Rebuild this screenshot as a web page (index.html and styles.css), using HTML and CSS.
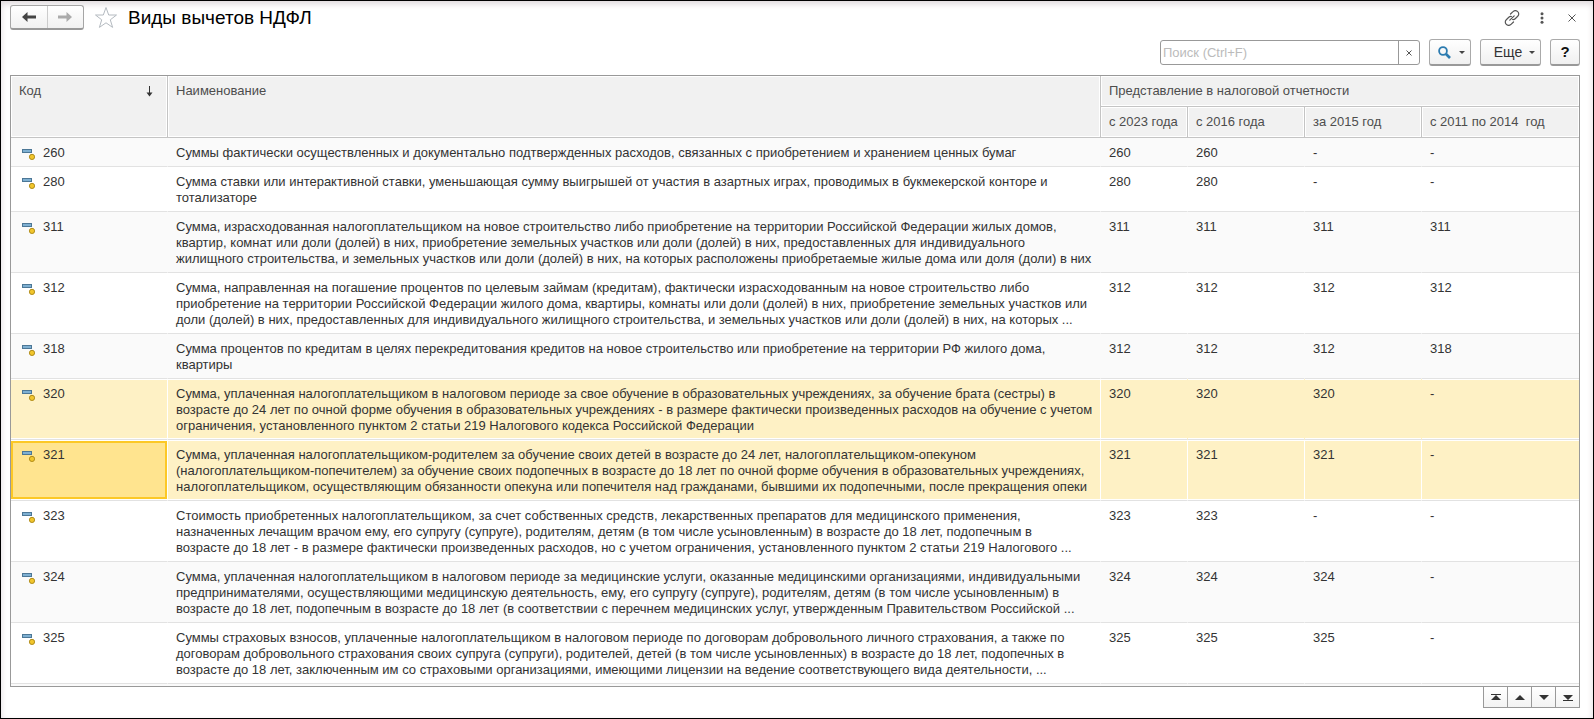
FILE: index.html
```html
<!DOCTYPE html>
<html lang="ru">
<head>
<meta charset="utf-8">
<title>Виды вычетов НДФЛ</title>
<link rel="stylesheet" href="styles.css">
</head>
<body>
<svg class="defs" aria-hidden="true">
  <symbol id="item" viewBox="0 0 13 11">
    <rect x=".5" y=".5" width="9" height="3" fill="#7fb0d2" stroke="#4c7796"/>
    <circle cx="10" cy="7.900" r="2.600" fill="#f2c62c" stroke="#b08d1c"/>
  </symbol>
</svg>
<main class="window">
  <header class="titlebar">
    <div class="history">
      <button type="button" aria-label="Назад"><svg width="14" height="10" viewBox="0 0 14 10"><path d="M0 5 5.500 0v3.600H14v2.800H5.500V10z" fill="#444"/></svg></button>
      <button type="button" aria-label="Вперед"><svg width="14" height="10" viewBox="0 0 14 10"><path d="M14 5 8.500 0v3.600H0v2.800h8.500V10z" fill="#ababab"/></svg></button>
    </div>
    <button type="button" class="plain star" aria-label="В избранное"><svg width="24" height="23" viewBox="0 0 24 23"><path d="M12 1.500 14.700 9h7.800l-6.200 4.800 2.300 7.600L12 16.800l-6.600 4.600 2.300-7.600L1.500 9h7.800z" fill="#fff" stroke="#b4bac0"/></svg></button>
    <h1>Виды вычетов НДФЛ</h1>
    <div class="actions">
      <button type="button" class="plain" aria-label="Ссылка"><svg width="16" height="16" viewBox="0 0 16 16" fill="none" stroke="#555" stroke-width="1.200" stroke-linecap="round"><path d="M6.500 4 9 1.600a3.200 3.200 0 0 1 4.700 0 3.200 3.200 0 0 1 0 4.700l-2.500 2.400a3 3 0 0 1-2.700.8M9.500 12 7 14.400a3.200 3.200 0 0 1-4.700 0 3.200 3.200 0 0 1 0-4.700l2.500-2.400a3 3 0 0 1 2.700-.8M5.800 10.200l4.400-4.400"/></svg></button>
      <button type="button" class="plain" aria-label="Меню"><svg width="4" height="12" viewBox="0 0 4 12" fill="#555"><circle cx="2" cy="1.700" r="1.500"/><circle cx="2" cy="6" r="1.500"/><circle cx="2" cy="10.300" r="1.500"/></svg></button>
      <button type="button" class="plain" aria-label="Закрыть"><svg width="8" height="8" viewBox="0 0 8 8" stroke="#555"><path d="m.5.5 7 7m0-7-7 7"/></svg></button>
    </div>
  </header>

  <form class="toolbar" role="search">
    <div class="search">
      <input type="text" aria-label="Поиск" placeholder="Поиск (Ctrl+F)">
      <button type="button" aria-label="Очистить"><svg width="6" height="6" viewBox="0 0 6 6" stroke="#555"><path d="m.5.5 5 5m0-5-5 5"/></svg></button>
    </div>
    <button type="button" class="button find" aria-label="Найти"><svg width="13" height="13" viewBox="0 0 13 13" fill="none" stroke="#2c7bb0"><circle cx="5" cy="5" r="3.900" stroke-width="1.800"/><path d="m8 8 4 4" stroke-width="2.600"/></svg><svg width="6" height="3" viewBox="0 0 6 3"><path d="M0 0h6L3 3z" fill="#444"/></svg></button>
    <button type="button" class="button more">Еще<svg width="6" height="3" viewBox="0 0 6 3"><path d="M0 0h6L3 3z" fill="#444"/></svg></button>
    <button type="button" class="button help" aria-label="Справка">?</button>
  </form>

  <div class="grid">
    <table>
      <colgroup><col class="c-code"><col><col class="c-2023"><col class="c-year"><col class="c-year"><col class="c-last"></colgroup>
      <thead>
        <tr>
          <th rowspan="2"><div class="sorted">Код<svg width="7" height="11" viewBox="0 0 7 11"><path d="M3.500 0v9" stroke="#333"/><path d="M.5 6.500h6l-3 4z" fill="#333"/></svg></div></th>
          <th rowspan="2">Наименование</th>
          <th colspan="4">Представление в налоговой отчетности</th>
        </tr>
        <tr><th>с 2023 года</th><th>с 2016 года</th><th>за 2015 год</th><th class="pre">с 2011 по 2014  год</th></tr>
      </thead>
      <tbody>
        <tr><td><svg class="item"><use href="#item"/></svg>260</td><td>Суммы фактически осуществленных и документально подтвержденных расходов, связанных с приобретением и хранением ценных бумаг</td><td>260</td><td>260</td><td>-</td><td>-</td></tr>
        <tr><td><svg class="item"><use href="#item"/></svg>280</td><td>Сумма ставки или интерактивной ставки, уменьшающая сумму выигрышей от участия в азартных играх, проводимых в букмекерской конторе и<br>тотализаторе</td><td>280</td><td>280</td><td>-</td><td>-</td></tr>
        <tr><td><svg class="item"><use href="#item"/></svg>311</td><td>Сумма, израсходованная налогоплательщиком на новое строительство либо приобретение на территории Российской Федерации жилых домов,<br>квартир, комнат или доли (долей) в них, приобретение земельных участков или доли (долей) в них, предоставленных для индивидуального<br>жилищного строительства, и земельных участков или доли (долей) в них, на которых расположены приобретаемые жилые дома или доля (доли) в них</td><td>311</td><td>311</td><td>311</td><td>311</td></tr>
        <tr><td><svg class="item"><use href="#item"/></svg>312</td><td>Сумма, направленная на погашение процентов по целевым займам (кредитам), фактически израсходованным на новое строительство либо<br>приобретение на территории Российской Федерации жилого дома, квартиры, комнаты или доли (долей) в них, приобретение земельных участков или<br>доли (долей) в них, предоставленных для индивидуального жилищного строительства, и земельных участков или доли (долей) в них, на которых ...</td><td>312</td><td>312</td><td>312</td><td>312</td></tr>
        <tr><td><svg class="item"><use href="#item"/></svg>318</td><td>Сумма процентов по кредитам в целях перекредитования кредитов на новое строительство или приобретение на территории РФ жилого дома,<br>квартиры</td><td>312</td><td>312</td><td>312</td><td>318</td></tr>
        <tr class="selected"><td><svg class="item"><use href="#item"/></svg>320</td><td>Сумма, уплаченная налогоплательщиком в налоговом периоде за свое обучение в образовательных учреждениях, за обучение брата (сестры) в<br>возрасте до 24 лет по очной форме обучения в образовательных учреждениях - в размере фактически произведенных расходов на обучение с учетом<br>ограничения, установленного пунктом 2 статьи 219 Налогового кодекса Российской Федерации</td><td>320</td><td>320</td><td>320</td><td>-</td></tr>
        <tr class="selected current"><td class="focus"><svg class="item"><use href="#item"/></svg>321</td><td>Сумма, уплаченная налогоплательщиком-родителем за обучение своих детей в возрасте до 24 лет, налогоплательщиком-опекуном<br>(налогоплательщиком-попечителем) за обучение своих подопечных в возрасте до 18 лет по очной форме обучения в образовательных учреждениях,<br>налогоплательщиком, осуществляющим обязанности опекуна или попечителя над гражданами, бывшими их подопечными, после прекращения опеки</td><td>321</td><td>321</td><td>321</td><td>-</td></tr>
        <tr><td><svg class="item"><use href="#item"/></svg>323</td><td>Стоимость приобретенных налогоплательщиком, за счет собственных средств, лекарственных препаратов для медицинского применения,<br>назначенных лечащим врачом ему, его супругу (супруге), родителям, детям (в том числе усыновленным) в возрасте до 18 лет, подопечным в<br>возрасте до 18 лет - в размере фактически произведенных расходов, но с учетом ограничения, установленного пунктом 2 статьи 219 Налогового ...</td><td>323</td><td>323</td><td>-</td><td>-</td></tr>
        <tr><td><svg class="item"><use href="#item"/></svg>324</td><td>Сумма, уплаченная налогоплательщиком в налоговом периоде за медицинские услуги, оказанные медицинскими организациями, индивидуальными<br>предпринимателями, осуществляющими медицинскую деятельность, ему, его супругу (супруге), родителям, детям (в том числе усыновленным) в<br>возрасте до 18 лет, подопечным в возрасте до 18 лет (в соответствии с перечнем медицинских услуг, утвержденным Правительством Российской ...</td><td>324</td><td>324</td><td>324</td><td>-</td></tr>
        <tr><td><svg class="item"><use href="#item"/></svg>325</td><td>Суммы страховых взносов, уплаченные налогоплательщиком в налоговом периоде по договорам добровольного личного страхования, а также по<br>договорам добровольного страхования своих супруга (супруги), родителей, детей (в том числе усыновленных) в возрасте до 18 лет, подопечных в<br>возрасте до 18 лет, заключенным им со страховыми организациями, имеющими лицензии на ведение соответствующего вида деятельности, ...</td><td>325</td><td>325</td><td>325</td><td>-</td></tr>
      </tbody>
    </table>
  </div>
  <nav class="pager" aria-label="Прокрутка списка">
    <button type="button" aria-label="В начало"><svg width="10" height="7" viewBox="0 0 10 7" fill="#333"><path d="M0 0h10v1H0zM5 1l5 5H0z"/></svg></button>
    <button type="button" aria-label="Вверх"><svg width="10" height="7" viewBox="0 0 10 7" fill="#333"><path d="m5 1 5 5H0z"/></svg></button>
    <button type="button" aria-label="Вниз"><svg width="10" height="7" viewBox="0 0 10 7" fill="#333"><path d="M0 1h10L5 6z"/></svg></button>
    <button type="button" aria-label="В конец"><svg width="10" height="7" viewBox="0 0 10 7" fill="#333"><path d="M0 1h10L5 6zM0 6h10v1H0z"/></svg></button>
  </nav>
</main>
</body>
</html>
```
FILE: styles.css
```css
* { box-sizing: border-box; }

body {
  margin: 0;
  font: 13px/16px "Liberation Sans", Arial, sans-serif;
  color: #333;
}

button, input { font: inherit; color: inherit; }
button { display: flex; align-items: center; justify-content: center; padding: 0; }
svg { display: block; flex: none; }
.defs { position: absolute; width: 0; height: 0; }

.window {
  min-height: 100vh;
  padding: 4px 13px 10px 9px;
  border: 1px solid #000;
  background: #fff;
  box-shadow: inset 0 3px 6px #ded8db;
}

.titlebar { display: flex; align-items: center; height: 25px; }
.history {
  display: flex;
  width: 74px;
  height: 25px;
  border: 1px solid #a6a6a6;
  border-bottom: 2px solid #999;
  border-radius: 3px;
  background: linear-gradient(#fff, #f1f1f1);
}
.history button { flex: 1; border: 0; background: none; }
.history button + button { border-left: 1px solid #ccc; }
.plain { border: 0; background: none; }
.star { margin: 0 10px; }
h1 { margin: 0; font-size: 19px; font-weight: 400; line-height: 24px; color: #000; }
.actions { display: flex; align-items: center; gap: 14px; margin-left: auto; }
.actions button { width: 16px; height: 16px; }

.toolbar { display: flex; align-items: center; gap: 9px; justify-content: flex-end; margin: 9px 0; height: 27px; }
.search {
  display: flex;
  width: 260px;
  height: 25px;
  border: 1px solid #999;
  border-radius: 3px;
  background: #fff;
}
.search input { flex: 1; min-width: 0; padding: 0 2px; border: 0; background: none; outline: 0; }
.search input::placeholder { color: #bbb; opacity: 1; }
.search button { width: 21px; border: 0; border-left: 1px solid #999; background: none; }
.button {
  height: 27px;
  border: 1px solid #aaa;
  border-bottom: 2px solid #999;
  border-radius: 3px;
  background: linear-gradient(#fff, #f0f0f0);
  font-size: 14px;
}
.find { width: 42px; gap: 8px; padding-left: 2px; }
.more { width: 61px; gap: 7px; padding-left: 8px; }
.help { width: 30px; font-size: 15px; font-weight: 700; color: #111; }

.grid { overflow: hidden; padding-bottom: 2px; border: 1px solid #999; background: #fafafa; }
table { width: 100%; table-layout: fixed; border-collapse: separate; border-spacing: 0; }
.c-code, .c-last { width: 157px; }
.c-2023 { width: 87px; }
.c-year { width: 117px; }

th {
  height: 31px;
  padding: 7px 8px;
  border-right: 1px solid #c4c4c4;
  border-bottom: 1px solid #c4c4c4;
  background: #f1f1f1;
  box-shadow: inset 0 0 0 1px #fff;
  font-weight: 400;
  color: #4d4d4d;
  text-align: left;
  vertical-align: top;
  white-space: nowrap;
}
th:last-child { border-right: 0; }
th.pre { white-space: pre; }
.sorted { display: flex; align-items: center; justify-content: space-between; padding-right: 6px; }

td {
  padding: 7px 8px 5px;
  border-bottom: 1px solid #e2e2e2;
  border-right: 1px solid transparent;
  background: #fff;
  vertical-align: top;
  white-space: nowrap;
}
td:last-child { border-right: 0; }
tbody tr:nth-child(odd) td { background: #fafafa; }
tbody .selected td,
tbody .selected:nth-child(odd) td {
  background: #fef1c5;
  box-shadow: inset 0 1px #fff, inset 0 -1px #fff;
}
.selected td:nth-child(-n+2), .current td { border-right-color: #fff; }
tbody .selected:nth-child(odd) .focus {
  background: #ffe48f;
  box-shadow: inset 0 1px #fff, inset 0 -1px #fff, inset 0 3px #fcc826, inset 0 -3px #fcc826, inset 2px 0 #fcc826, inset -2px 0 #fcc826;
}
.item { float: left; width: 13px; height: 11px; margin: 4px 8px 0 3px; }

.pager { display: flex; justify-content: flex-end; }
.pager button {
  width: 24px;
  height: 21px;
  border: solid #999;
  border-width: 0 0 1px 1px;
  background: linear-gradient(#fff, #f3f3f3);
}
.pager button:last-child { width: 25px; border-right-width: 1px; }
```
